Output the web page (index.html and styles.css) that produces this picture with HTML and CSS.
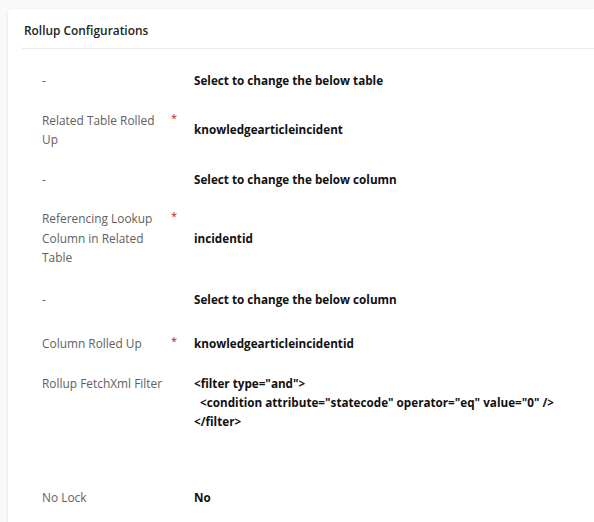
FILE: index.html
```html
<!DOCTYPE html>
<html>
<head>
<meta charset="utf-8">
<link rel="stylesheet" href="styles.css">
</head>
<body>
<div class="card">
  <div class="header"><span class="title">Rollup Configurations</span></div>
  <div class="rows">
    <div class="row">
      <div class="label">-</div>
      <div class="req"></div>
      <div class="value">Select to change the below table</div>
    </div>
    <div class="row">
      <div class="label">Related Table Rolled Up</div>
      <div class="req">*</div>
      <div class="value">knowledgearticleincident</div>
    </div>
    <div class="row">
      <div class="label">-</div>
      <div class="req"></div>
      <div class="value">Select to change the below column</div>
    </div>
    <div class="row">
      <div class="label">Referencing Lookup Column in Related Table</div>
      <div class="req">*</div>
      <div class="value">incidentid</div>
    </div>
    <div class="row row-after">
      <div class="label">-</div>
      <div class="req"></div>
      <div class="value">Select to change the below column</div>
    </div>
    <div class="row row-loose">
      <div class="label">Column Rolled Up</div>
      <div class="req">*</div>
      <div class="value">knowledgearticleincidentid</div>
    </div>
    <div class="row row-top">
      <div class="label">Rollup FetchXml Filter</div>
      <div class="req"></div>
      <div class="value filter">&lt;filter type="and"&gt;<br>&nbsp;&nbsp;&lt;condition attribute="statecode" operator="eq" value="0" /&gt;<br>&lt;/filter&gt;</div>
    </div>
    <div class="row">
      <div class="label">No Lock</div>
      <div class="req"></div>
      <div class="value">No</div>
    </div>
  </div>
</div>
</body>
</html>
```

FILE: styles.css
```css
html, body {
  margin: 0;
  padding: 0;
  background: #faf9f8;
}
body {
  font-family: "Open Sans", "Noto Sans", sans-serif;
  padding: 9px 0 0 8px;
  overflow: hidden;
  height: 522px;
  box-sizing: border-box;
}
.card {
  background: #ffffff;
  border-radius: 4px 0 0 0;
  box-shadow: 0 0 2px rgba(0,0,0,0.08), 0 1px 3px rgba(0,0,0,0.06);
  height: 520px;
  padding: 0 0 0 14px;
}
.header {
  height: 40px;
  border-bottom: 1px solid #edebe9;
  display: flex;
  align-items: center;
  padding: 3px 0 0 2px;
  box-sizing: border-box;
}
.title {
  font-size: 11.9px;
  font-weight: 600;
  color: #242424;
}
.rows {
  display: flex;
  flex-direction: column;
  padding: 12px 0 0 20px;
}
.row {
  display: grid;
  grid-template-columns: 129px 23px 1fr;
  align-items: center;
  padding: 10px 0;
  line-height: 19.5px;
}
.row-after {
  padding-top: 12px;
}
.row-loose {
  padding-top: 15px;
}
.row-top {
  align-items: start;
  padding-top: 10px;
}
.label {
  font-size: 11.9px;
  color: #616161;
  width: 128px;
}
.req {
  color: #c50f1f;
  font-size: 11px;
  align-self: start;
  line-height: 14px;
}
.value {
  font-size: 11.7px;
  font-weight: 700;
  color: #111111;
  white-space: nowrap;
}
.filter {
  min-height: 94px;
  line-height: 19px;
}
```
